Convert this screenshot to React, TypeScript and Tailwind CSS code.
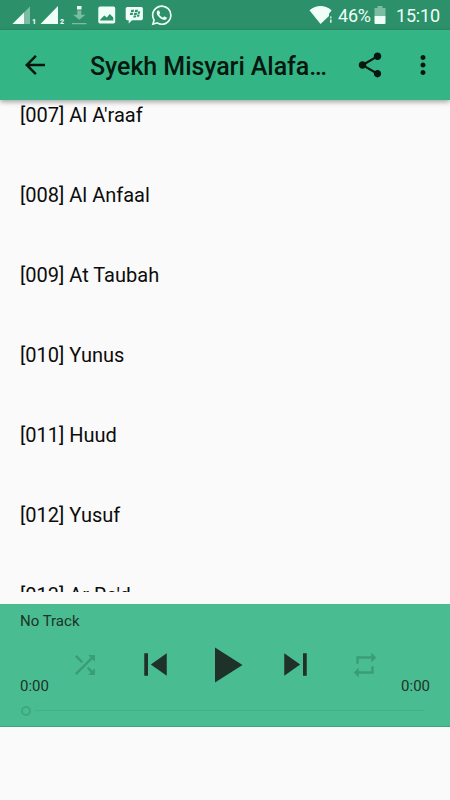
import React from "react";

const surahs = [
  "[007] Al A'raaf",
  "[008] Al Anfaal",
  "[009] At Taubah",
  "[010] Yunus",
  "[011] Huud",
  "[012] Yusuf",
  "[013] Ar Ra'd",
];

function Icon({ d, className }: { d: string; className: string }) {
  return (
    <svg viewBox="0 0 24 24" fill="currentColor" className={`shrink-0 ${className}`}>
      <path d={d} />
    </svg>
  );
}

function StatusBar() {
  return (
    <div className="flex h-[30px] shrink-0 items-center bg-[#2c916a] text-[#effff8]">
      <svg width="180" height="30" viewBox="0 0 180 30" className="shrink-0" fill="currentColor">
        <path d="M30 6.500V24H12.500z" opacity=".4" />
        <path d="M24 12.500V24H12.500z" />
        <path d="M58 6V24H40.500z" />
        <text x="32" y="24" fontSize="7" fontWeight="900" fontFamily="Roboto">1</text>
        <text x="60" y="24" fontSize="7" fontWeight="900" fontFamily="Roboto">2</text>
        <rect x="77" y="6" width="4.500" height="3.500" />
        <path d="M77.300 10.500h4v4.300h4.200l-6.200 5-6.200-5h4.200zM72 23h14.500v1.300H72z" opacity=".4" />
        <path
          fillRule="evenodd"
          d="M100 6.500h13.500a1.700 1.700 0 0 1 1.700 1.700v13.600a1.700 1.700 0 0 1-1.700 1.700H100a1.700 1.700 0 0 1-1.700-1.700V8.200a1.700 1.700 0 0 1 1.700-1.700zM100.300 20.500h13v-3l-3.500-3.500-3 3.500-2.500-2-4 4z"
        />
        <path d="M127.300 7h14a1.600 1.600 0 0 1 1.600 1.600v10a1.600 1.600 0 0 1-1.600 1.600h-9.300l-3.300 3.300v-3.300h-1.400a1.600 1.600 0 0 1-1.600-1.600v-10A1.600 1.600 0 0 1 127.300 7z" />
        <g fill="#2c916a">
          <path d="M131.300 9.800h2.800l-.5 2.200h-2.800zM135.200 9.800h2.800l-.5 2.200h-2.800zM130.300 12.800h2.800l-.5 2.200h-2.800zM134.300 12.800h2.800l-.5 2.200h-2.800zM138 11.500h2.300l-.5 2.200h-2.300zM137.300 14.500h2.300l-.5 2.200h-2.300zM133.600 15.600h2.600l-.4 2h-2.600z" />
        </g>
        <g transform="translate(151.700 5.200) scale(.835)">
          <path d="M17.472 14.382c-.297-.149-1.758-.867-2.030-.967-.273-.099-.471-.148-.670.150-.197.297-.767.966-.940 1.164-.173.199-.347.223-.644.075-.297-.150-1.255-.463-2.390-1.475-.883-.788-1.480-1.761-1.653-2.059-.173-.297-.018-.458.130-.606.134-.133.298-.347.446-.520.149-.174.198-.298.298-.497.099-.198.050-.371-.025-.520-.075-.149-.669-1.612-.916-2.207-.242-.579-.487-.500-.669-.510-.173-.008-.371-.010-.570-.010-.198 0-.520.074-.792.372-.272.297-1.040 1.016-1.040 2.479 0 1.462 1.065 2.875 1.213 3.074.149.198 2.096 3.200 5.077 4.487.709.306 1.262.489 1.694.625.712.227 1.360.195 1.871.118.571-.085 1.758-.719 2.006-1.413.248-.694.248-1.289.173-1.413-.074-.124-.272-.198-.570-.347m-5.421 7.403h-.004a9.870 9.870 0 01-5.031-1.378l-.361-.214-3.741.982.998-3.648-.235-.374a9.860 9.860 0 01-1.510-5.260c.001-5.450 4.436-9.884 9.888-9.884 2.640 0 5.122 1.030 6.988 2.898a9.825 9.825 0 012.893 6.994c-.003 5.450-4.437 9.884-9.885 9.884m8.413-18.297A11.815 11.815 0 0012.050 0C5.495 0 .160 5.335.157 11.892c0 2.096.547 4.142 1.588 5.945L.057 24l6.305-1.654a11.882 11.882 0 005.683 1.448h.005c6.554 0 11.890-5.335 11.893-11.893a11.821 11.821 0 00-3.480-8.413Z" />
        </g>
      </svg>
      <div className="flex-1" />
      <svg width="28" height="30" viewBox="308 0 28 30" className="shrink-0" fill="currentColor">
        <path d="M309.500 10.200Q320.500 1.800 331.600 10.200L329 13.800V16L320.500 24z" />
        <path d="M330 16.500h1.600v1.700H330zM330 19.500h1.600v3.300H330z" opacity=".85" />
      </svg>
      <div className="ml-[2px] w-[34px] whitespace-nowrap pt-px text-[18px] leading-[30px] tracking-[-0.2px]">46%</div>
      <svg width="14" height="30" viewBox="0 0 14 30" className="ml-[1px] shrink-0" fill="currentColor">
        <path d="M1.500 8h3V6h5v2h3v8h-11z" opacity=".4" />
        <path d="M1.500 16h11v7a1 1 0 0 1-1 1h-9a1 1 0 0 1-1-1z" />
      </svg>
      <div className="ml-[9px] w-[54px] whitespace-nowrap pt-px text-[18px] leading-[30px] tracking-[-0.2px]">15:10</div>
    </div>
  );
}

export default function App() {
  return (
    <div className="flex h-[800px] w-[450px] flex-col overflow-hidden bg-[#fafafa] font-['Roboto',sans-serif]">
      <StatusBar />
      <header className="z-10 flex h-[70px] shrink-0 items-center bg-[#34b585] pl-5 text-[#06170f] shadow-[0_2px_5px_rgba(0,0,0,0.35)]">
        <Icon className="size-[30px]" d="M20 11H7.830l5.590-5.590L12 4l-8 8 8 8 1.410-1.410L7.830 13H20v-2z" />
        <h1 className="ml-10 w-[265px] whitespace-nowrap pt-[3px] text-[25px] font-medium leading-[70px] tracking-[-0.07px]">Syekh Misyari Alafa…</h1>
        <Icon
          className="size-[30px]"
          d="M18 16.080c-.760 0-1.440.300-1.960.770L8.910 12.700c.050-.230.090-.460.090-.700s-.040-.470-.090-.700l7.050-4.110c.540.500 1.250.810 2.040.810 1.660 0 3-1.340 3-3s-1.340-3-3-3-3 1.340-3 3c0 .240.040.470.090.700L8.040 9.810C7.500 9.310 6.790 9 6 9c-1.660 0-3 1.340-3 3s1.340 3 3 3c.790 0 1.500-.310 2.040-.810l7.120 4.160c-.050.210-.080.430-.080.650 0 1.610 1.310 2.920 2.920 2.920s2.920-1.310 2.920-2.920-1.310-2.920-2.920-2.920z"
        />
        <Icon
          className="ml-[22.500px] size-[30px]"
          d="M12 8c1.100 0 2-.9 2-2s-.9-2-2-2-2 .9-2 2 .9 2 2 2zm0 2c-1.100 0-2 .9-2 2s.9 2 2 2 2-.9 2-2-.9-2-2-2zm0 6c-1.100 0-2 .9-2 2s.9 2 2 2 2-.9 2-2-.9-2-2-2z"
        />
      </header>

      <ul className="h-[492px] shrink-0 overflow-hidden">
        {surahs.map((name) => (
          <li key={name} className="mb-[50px] h-[30px] pl-5 text-[20px] leading-[31px] text-[#0c0c0c]">
            {name}
          </li>
        ))}
      </ul>

      <section className="mt-3 flex h-[123px] shrink-0 flex-col border-b border-[#43a17d] bg-[#49bd91] text-[#1f3229]">
        <div className="h-[31px] pl-5 pt-[7px] text-[15px] leading-5">No Track</div>
        <div className="flex h-[60px] items-center px-5">
          <span className="w-[30px] pt-[43px] text-[15px] leading-5">0:00</span>
          <div className="grid flex-1 grid-cols-5 place-items-center">
            <Icon
              className="size-[30px] text-[#3b9d78]"
              d="M10.590 9.170L5.410 4 4 5.410l5.170 5.170 1.420-1.410zM14.500 4l2.040 2.040L4 18.590 5.410 20 17.960 7.460 20 9.500V4h-5.500zm.330 9.410l-1.410 1.410 3.130 3.130L14.500 20H20v-5.500l-2.040 2.040-3.130-3.130z"
            />
            <Icon className="size-[45px]" d="M6 6h2v12H6zm3.500 6l8.500 6V6z" />
            <Icon className="size-[60px]" d="M8 5v14l11-7z" />
            <Icon className="size-[45px]" d="M6 18l8.500-6L6 6v12zM16 6v12h2V6h-2z" />
            <Icon
              className="size-[30px] text-[#3b9d78]"
              d="M7 7h10v3l4-4-4-4v3H5v6h2V7zm10 10H7v-3l-4 4 4 4v-3h12v-6h-2v4z"
            />
          </div>
          <span className="w-[30px] pt-[43px] text-right text-[15px] leading-5">0:00</span>
        </div>
        <div className="flex h-8 items-center pl-[21px] pr-[26px] pt-px">
          <div className="size-[10px] rounded-full border-2 border-[#3fa780]" />
          <div className="ml-1 h-px flex-1 bg-[#43b288]" />
        </div>
      </section>
    </div>
  );
}
